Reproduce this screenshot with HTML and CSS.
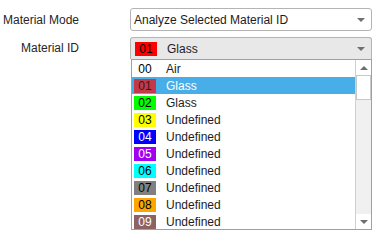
FILE: index.html
```html
<!DOCTYPE html>
<html lang="en">

<head>
    <meta charset="UTF-8">
    <title>Material</title>
    <link rel="stylesheet" href="styles.css">
</head>

<body>
    <div class="panel">
        <div class="row">
            <label class="label">Material Mode</label>
            <div class="combo">
                <span class="combo-text">Analyze Selected Material ID</span>
                <span class="arrow"></span>
            </div>
        </div>

        <div class="row row-id">
            <label class="label">Material ID</label>
            <div class="picker">
                <div class="combo open">
                    <span class="swatch c01">01</span>
                    <span class="combo-text">Glass</span>
                    <span class="arrow"></span>
                </div>
                <div class="list">
                    <ul class="items">
                        <li><span class="swatch">00</span>Air</li>
                        <li class="selected"><span class="swatch c01">01</span>Glass</li>
                        <li><span class="swatch c02">02</span>Glass</li>
                        <li><span class="swatch c03">03</span>Undefined</li>
                        <li><span class="swatch c04">04</span>Undefined</li>
                        <li><span class="swatch c05">05</span>Undefined</li>
                        <li><span class="swatch c06">06</span>Undefined</li>
                        <li><span class="swatch c07">07</span>Undefined</li>
                        <li><span class="swatch c08">08</span>Undefined</li>
                        <li><span class="swatch c09">09</span>Undefined</li>
                    </ul>
                    <div class="scrollbar">
                        <div class="sb-btn"><span class="up"></span></div>
                        <div class="thumb"></div>
                        <div class="track"></div>
                        <div class="sb-btn"><span class="down"></span></div>
                    </div>
                </div>
            </div>
        </div>
    </div>
</body>

</html>
```

FILE: styles.css
```css
body {
    margin: 0;
    background-color: #fff;
    font-family: "Liberation Sans", Arial, sans-serif;
    font-size: 12px;
    color: #1c1c24;
}

.panel {
    display: flex;
    flex-direction: column;
    gap: 6px;
    padding-top: 8px;
}

.row {
    display: flex;
    align-items: center;
}

.row-id {
    align-items: flex-start;
}

.label {
    width: 79px;
    text-align: right;
    margin-right: 51px;
    color: #262626;
}

.row-id .label {
    margin-top: 4px;
}

.combo {
    width: 242px;
    height: 23px;
    box-sizing: border-box;
    border: 1px solid #b4b4b4;
    border-radius: 3px;
    display: flex;
    align-items: center;
    padding-left: 3px;
    background-color: #fff;
}

.combo.open {
    height: 22px;
    background-color: #e8e8e8;
    border-radius: 3px 3px 0 0;
    border-bottom: none;
    padding-left: 4px;
}

.combo-text {
    flex: 1;
}

.arrow {
    width: 0;
    height: 0;
    border-left: 4px solid transparent;
    border-right: 4px solid transparent;
    border-top: 4px solid #6f6f6f;
    margin-right: 6px;
}

.list {
    margin-left: 1px;
    width: 241px;
    height: 171px;
    box-sizing: border-box;
    border: 1px solid #a0a0a0;
    display: flex;
    background-color: #fff;
}

.items {
    list-style: none;
    margin: 0;
    padding: 0;
    flex: 1;
}

.items li {
    height: 17px;
    display: flex;
    align-items: center;
    padding-left: 2px;
}

.items li.selected {
    background-color: #47aee7;
    color: #fff;
}

.swatch {
    width: 22px;
    height: 14px;
    line-height: 14px;
    text-align: center;
    margin-right: 10px;
    color: #000;
}

.c01 { background-color: #ff0000; }
.c02 { background-color: #00ff00; }
.c03 { background-color: #ffff00; }
.c04 { background-color: #0000ff; color: #fff; }
.c05 { background-color: #a000f0; color: #fff; }
.c06 { background-color: #00ffff; }
.c07 { background-color: #808080; }
.c08 { background-color: #ffa500; }
.c09 { background-color: #8b6363; color: #fff; }

.selected .c01 {
    background-color: #c23a4a;
    color: #3c1418;
}

.scrollbar {
    width: 15px;
    border-left: 1px solid #d0d0d0;
    display: flex;
    flex-direction: column;
    background-color: #f0f0f0;
}

.sb-btn {
    height: 15px;
    display: flex;
    align-items: center;
    justify-content: center;
    background-color: #fff;
}

.thumb {
    height: 25px;
    box-sizing: border-box;
    border: 1px solid #c8c8c8;
    background-color: #fff;
}

.track {
    flex: 1;
}

.up,
.down {
    width: 0;
    height: 0;
    border-left: 4px solid transparent;
    border-right: 4px solid transparent;
}

.up {
    border-bottom: 4px solid #6f6f6f;
}

.down {
    border-top: 4px solid #6f6f6f;
}
```
